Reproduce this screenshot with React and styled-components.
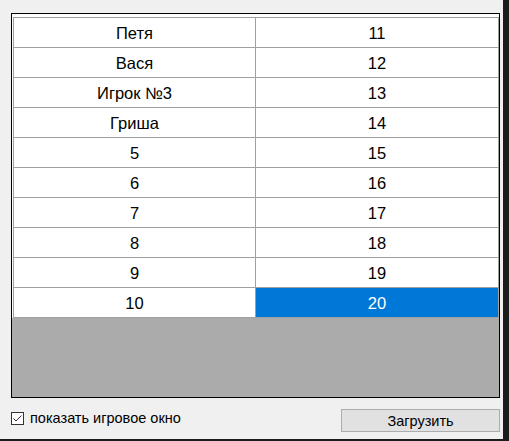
import React from 'react';
import styled, { createGlobalStyle } from 'styled-components';

const GlobalStyle = createGlobalStyle`
  html, body {
    margin: 0;
    padding: 0;
    background: #1c1c1c;
  }
`;

const Desktop = styled.div`
  width: 509px;
  height: 441px;
  background: #1c1c1c;
`;

const Window = styled.div`
  width: 503px;
  height: 439px;
  box-sizing: border-box;
  background: #f0f0f0;
  padding: 13px 0 0 11px;
  font-family: 'Liberation Sans', Arial, sans-serif;
  display: flex;
  flex-direction: column;
`;

const Grid = styled.div`
  width: 489px;
  height: 385px;
  box-sizing: border-box;
  border: 1px solid #000;
  background: #ababab;
`;

const Table = styled.div`
  background: #fff;
  padding: 3px 0 0 1px;
`;

const Rows = styled.div`
  border-top: 1px solid #a0a0a0;
  border-left: 1px solid #a0a0a0;
`;

const Row = styled.div`
  display: grid;
  grid-template-columns: 242px 243px;
`;

const Cell = styled.div`
  box-sizing: content-box;
  height: 28px;
  padding-top: 1px;
  border-right: 1px solid #a0a0a0;
  border-bottom: 1px solid #a0a0a0;
  display: flex;
  align-items: center;
  justify-content: center;
  font-size: 16.5px;
  color: ${(p) => (p.$selected ? '#fff' : '#000')};
  background: ${(p) => (p.$selected ? '#0078d7' : '#fff')};
`;

const Footer = styled.div`
  width: 489px;
  margin-top: 11px;
  display: flex;
  justify-content: space-between;
  align-items: flex-start;
`;

const CheckLabel = styled.label`
  display: flex;
  align-items: center;
  gap: 6px;
  margin-top: 1px;
  font-size: 14.5px;
  color: #000;
`;

const Box = styled.span`
  display: inline-flex;
  width: 13px;
  height: 13px;
`;

const Button = styled.button`
  width: 159px;
  height: 23px;
  box-sizing: border-box;
  border: 1px solid #adadad;
  background: #e1e1e1;
  font-family: 'Liberation Sans', Arial, sans-serif;
  font-size: 14.5px;
  color: #000;
  padding: 0;
`;

const rows = [
  ['Петя', '11'],
  ['Вася', '12'],
  ['Игрок №3', '13'],
  ['Гриша', '14'],
  ['5', '15'],
  ['6', '16'],
  ['7', '17'],
  ['8', '18'],
  ['9', '19'],
  ['10', '20'],
];

const CheckIcon = () => (
  <Box>
    <svg width="13" height="13" viewBox="0 0 13 13">
      <rect x="0.5" y="0.5" width="12" height="12" fill="#fff" stroke="#333" />
      <polyline points="2.5,6.5 5,9 10.5,3.5" fill="none" stroke="#333" strokeWidth="1" />
    </svg>
  </Box>
);

const App = () => (
  <Desktop>
    <GlobalStyle />
    <Window>
      <Grid>
        <Table>
          <Rows>
            {rows.map(([name, score], i) => (
              <Row key={i}>
                <Cell>{name}</Cell>
                <Cell $selected={i === rows.length - 1}>{score}</Cell>
              </Row>
            ))}
          </Rows>
        </Table>
      </Grid>
      <Footer>
        <CheckLabel>
          <CheckIcon />
          показать игровое окно
        </CheckLabel>
        <Button>Загрузить</Button>
      </Footer>
    </Window>
  </Desktop>
);

export default App;
